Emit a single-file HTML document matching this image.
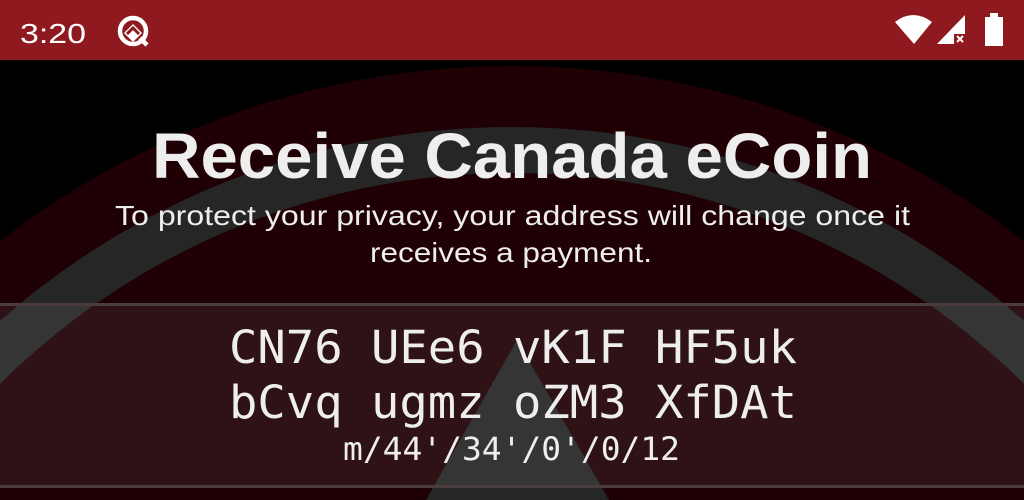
<!DOCTYPE html>
<html><head><meta charset="utf-8"><style>
html,body{margin:0;padding:0;width:1024px;height:500px;overflow:hidden;background:#000}
svg{display:block}
</style></head><body>
<svg width="1024" height="500" viewBox="0 0 1024 500" xmlns="http://www.w3.org/2000/svg">
<defs><clipPath id="c"><rect x="0" y="60" width="1024" height="440"/></clipPath></defs>
<rect width="1024" height="500" fill="#000"/>
<g clip-path="url(#c)">
<circle cx="512" cy="902" r="836" fill="#1f0004"/>
<circle cx="512" cy="900" r="750" fill="none" stroke="#262626" stroke-width="46"/>
<polygon points="517,340 426,500 609,500" fill="#262626"/>
</g>
<rect x="0" y="305" width="1024" height="182" fill="rgba(255,255,255,0.07)"/>
<rect x="0" y="303" width="1024" height="3" fill="#4a3c3c"/>
<rect x="0" y="485" width="1024" height="3" fill="#4a3c3c"/>
<!-- status bar -->
<rect width="1024" height="60" fill="#8e191e"/>
<text x="20" y="43" font-family="Liberation Sans, sans-serif" font-size="28" fill="#fff" textLength="66" lengthAdjust="spacingAndGlyphs">3:20</text>
<circle cx="133" cy="31" r="13" fill="none" stroke="#fff" stroke-width="4.5"/>
<path d="M124 33 L133 24 L142 33 L133 42 Z" fill="#fff"/>
<path d="M127 34 L133 28 L139 34" fill="none" stroke="#8e191e" stroke-width="3"/>
<path d="M140 38 L147 45" stroke="#fff" stroke-width="4.5"/>
<path d="M895 22 Q913 8 932 22 L914 44 Z" fill="#fff"/>
<path d="M937 44 L965 15 L965 44 Z" fill="#fff"/>
<rect x="954" y="34" width="12" height="12" fill="#8e191e"/>
<path d="M957 36 L963 42 M963 36 L957 42" stroke="#fff" stroke-width="2"/>
<rect x="985" y="17" width="18" height="29" fill="#fff"/>
<rect x="990" y="13" width="8" height="5" fill="#fff"/>
<!-- content text -->
<text x="152" y="178" font-family="Liberation Sans, sans-serif" font-weight="bold" font-size="64" fill="#eeeeee" textLength="720" lengthAdjust="spacingAndGlyphs">Receive Canada eCoin</text>
<text x="115" y="225" font-family="Liberation Sans, sans-serif" font-size="28" fill="#eeeeee" textLength="795" lengthAdjust="spacingAndGlyphs">To protect your privacy, your address will change once it</text>
<text x="370" y="262" font-family="Liberation Sans, sans-serif" font-size="28" fill="#eeeeee" textLength="282" lengthAdjust="spacingAndGlyphs">receives a payment.</text>
<text x="229" y="363" font-family="DejaVu Sans Mono, Liberation Mono, monospace" font-size="45" fill="#eeeeee" textLength="568" lengthAdjust="spacingAndGlyphs">CN76 UEe6 vK1F HF5uk</text>
<text x="229" y="418" font-family="DejaVu Sans Mono, Liberation Mono, monospace" font-size="45" fill="#eeeeee" textLength="568" lengthAdjust="spacingAndGlyphs">bCvq ugmz oZM3 XfDAt</text>
<text x="343" y="460" font-family="DejaVu Sans Mono, Liberation Mono, monospace" font-size="32" fill="#eeeeee" textLength="337" lengthAdjust="spacingAndGlyphs">m/44'/34'/0'/0/12</text>
</svg>
</body></html>
